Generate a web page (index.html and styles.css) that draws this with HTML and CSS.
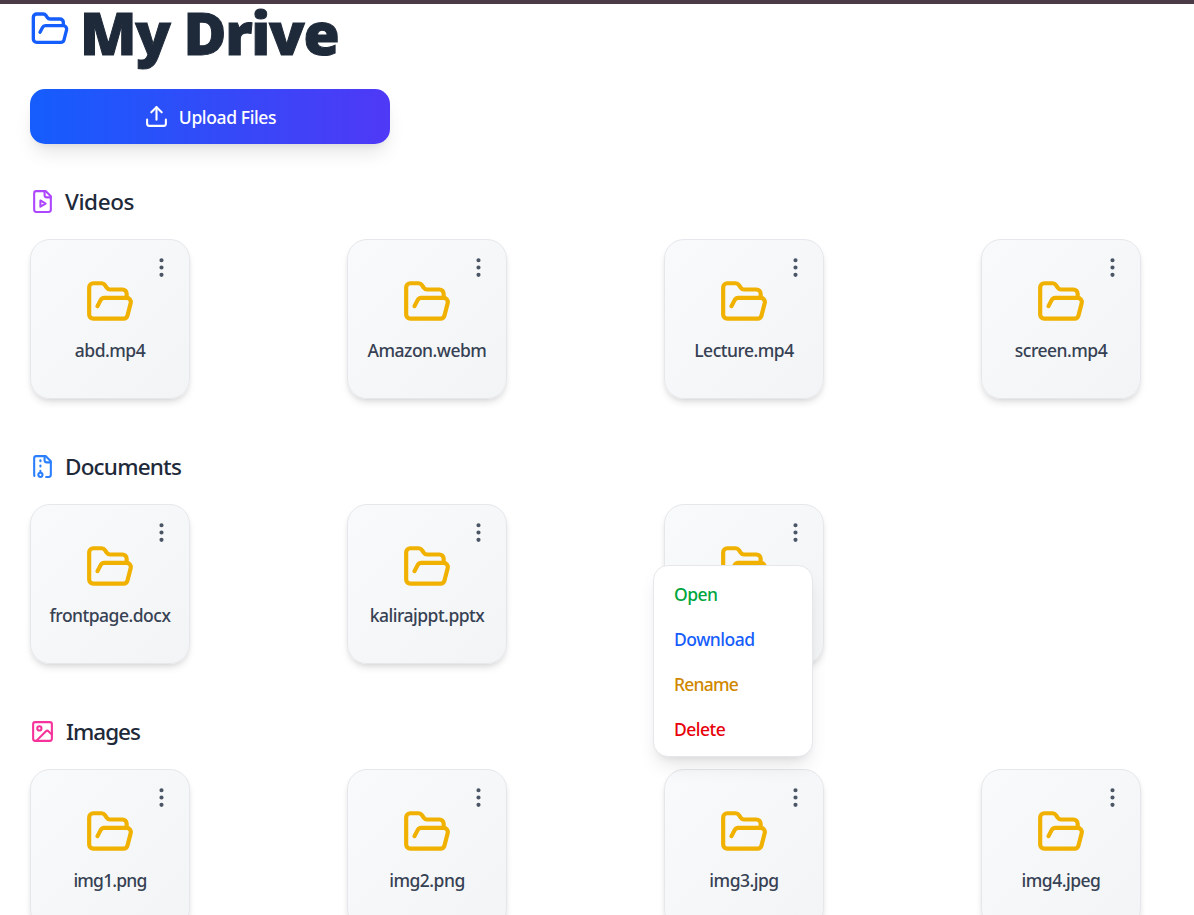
FILE: index.html
```
<!DOCTYPE html>
<html lang="en">
<head>
<meta charset="utf-8">
<title>My Drive</title>
<link rel="stylesheet" href="styles.css">
</head>
<body>
<svg class="sprite" aria-hidden="true">
  <symbol id="folder" viewBox="0 0 24 24"><path d="m6 14 1.5-2.9A2 2 0 0 1 9.24 10H20a2 2 0 0 1 1.94 2.5l-1.54 6a2 2 0 0 1-1.95 1.5H4a2 2 0 0 1-2-2V5a2 2 0 0 1 2-2h3.9a2 2 0 0 1 1.69.9l.81 1.2a2 2 0 0 0 1.67.9H18a2 2 0 0 1 2 2v2"/></symbol>
  <symbol id="upload" viewBox="0 0 24 24"><path d="M12 3v12"/><path d="m17 8-5-5-5 5"/><path d="M21 15v4a2 2 0 0 1-2 2H5a2 2 0 0 1-2-2v-4"/></symbol>
  <symbol id="video" viewBox="0 0 24 24"><path d="M15 2H6a2 2 0 0 0-2 2v16a2 2 0 0 0 2 2h12a2 2 0 0 0 2-2V7Z"/><path d="M14 2v4a2 2 0 0 0 2 2h4"/><path d="m10 11 5 3-5 3v-6Z"/></symbol>
  <symbol id="archive" viewBox="0 0 24 24"><path d="M10 12v-1"/><path d="M10 18v-2"/><path d="M10 7V6"/><path d="M14 2v4a2 2 0 0 0 2 2h4"/><path d="M15.5 22H18a2 2 0 0 0 2-2V7l-5-5H6a2 2 0 0 0-2 2v16a2 2 0 0 0 .274 1.01"/><circle cx="10" cy="20" r="2"/></symbol>
  <symbol id="image" viewBox="0 0 24 24"><rect x="3" y="3" width="18" height="18" rx="2"/><circle cx="9" cy="9" r="2"/><path d="m21 15-3.086-3.086a2 2 0 0 0-2.828 0L6 21"/></symbol>
  <symbol id="dots" viewBox="0 0 24 24"><circle cx="12" cy="12" r="1"/><circle cx="12" cy="5" r="1"/><circle cx="12" cy="19" r="1"/></symbol>
</svg>
<div class="topbar"></div>
<main class="drive">
  <h1 class="title"><svg class="icon title-icon"><use href="#folder"/></svg><span class="title-text">My Drive</span></h1>
  <button class="upload"><svg class="icon small"><use href="#upload"/></svg><span class="upload-text">Upload Files</span></button>

  <section class="group">
    <h2 class="heading"><svg class="icon small purple"><use href="#video"/></svg><span class="videos">Videos</span></h2>
    <div class="files">
      <div class="card"><svg class="icon small dots"><use href="#dots"/></svg><svg class="icon folder"><use href="#folder"/></svg><p class="name">abd.mp4</p></div>
      <div class="card"><svg class="icon small dots"><use href="#dots"/></svg><svg class="icon folder"><use href="#folder"/></svg><p class="name">Amazon.webm</p></div>
      <div class="card"><svg class="icon small dots"><use href="#dots"/></svg><svg class="icon folder"><use href="#folder"/></svg><p class="name">Lecture.mp4</p></div>
      <div class="card"><svg class="icon small dots"><use href="#dots"/></svg><svg class="icon folder"><use href="#folder"/></svg><p class="name">screen.mp4</p></div>
    </div>
  </section>

  <section class="group">
    <h2 class="heading"><svg class="icon small blue"><use href="#archive"/></svg><span class="documents">Documents</span></h2>
    <div class="files">
      <div class="card"><svg class="icon small dots"><use href="#dots"/></svg><svg class="icon folder"><use href="#folder"/></svg><p class="name">frontpage.docx</p></div>
      <div class="card"><svg class="icon small dots"><use href="#dots"/></svg><svg class="icon folder"><use href="#folder"/></svg><p class="name">kalirajppt.pptx</p></div>
      <div class="card"><svg class="icon small dots"><use href="#dots"/></svg><svg class="icon folder"><use href="#folder"/></svg>
        <div class="menu">
          <a class="item open">Open</a>
          <a class="item download">Download</a>
          <a class="item rename">Rename</a>
          <a class="item delete">Delete</a>
        </div>
      </div>
    </div>
  </section>

  <section class="group">
    <h2 class="heading"><svg class="icon small pink"><use href="#image"/></svg><span class="images">Images</span></h2>
    <div class="files">
      <div class="card"><svg class="icon small dots"><use href="#dots"/></svg><svg class="icon folder"><use href="#folder"/></svg><p class="name image-name">img1.png</p></div>
      <div class="card"><svg class="icon small dots"><use href="#dots"/></svg><svg class="icon folder"><use href="#folder"/></svg><p class="name">img2.png</p></div>
      <div class="card"><svg class="icon small dots"><use href="#dots"/></svg><svg class="icon folder"><use href="#folder"/></svg><p class="name">img3.jpg</p></div>
      <div class="card"><svg class="icon small dots"><use href="#dots"/></svg><svg class="icon folder"><use href="#folder"/></svg><p class="name">img4.jpeg</p></div>
    </div>
  </section>
</main>
</body>
</html>
```
FILE: styles.css
```
* { box-sizing: border-box; margin: 0; padding: 0; }
html, body { height: 915px; overflow: hidden; }
body {
  background: #fff;
  color: #1e2939;
  font-family: "Noto Sans", "Open Sans", sans-serif;
}
.sprite { display: none; }
.topbar { height: 4px; background: #4c3a46; }
.drive { padding: 0 53px 0 30px; }
.icon {
  display: block;
  flex: none;
  fill: none;
  stroke: currentColor;
  stroke-width: 2;
  stroke-linecap: round;
  stroke-linejoin: round;
}
.small { width: 25px; height: 25px; }
.title {
  display: flex;
  gap: 10px;
  height: 60px;
  line-height: 56px;
  font-size: 58.5px;
  font-weight: 900;
  letter-spacing: -1.3px;
  white-space: nowrap;
  -webkit-text-stroke: 1px #1e2939;
}
.title-icon { width: 40px; height: 40px; margin-top: 5px; color: #155dfc; }
.upload {
  display: flex;
  align-items: center;
  justify-content: center;
  gap: 10px;
  width: 360px;
  height: 55px;
  margin-top: 25px;
  border: 0;
  border-radius: 15px;
  background: linear-gradient(to right, #155dfc, #4f39f6);
  box-shadow: 0 12px 19px -4px rgba(0, 0, 0, .1), 0 5px 8px -5px rgba(0, 0, 0, .1);
  color: #fff;
  font: 500 17.5px/25px "Noto Sans", "Open Sans", sans-serif;
  letter-spacing: -.38px;
}
.upload-text { padding-top: 2px; }
.group { margin-top: 40px; height: 225px; }
.heading {
  display: flex;
  align-items: center;
  gap: 10px;
  height: 35px;
  font-size: 22.5px;
  line-height: 35px;
  font-weight: 500;
  letter-spacing: -.4px;
}
.documents { letter-spacing: -.8px; }
.images { letter-spacing: -1px; padding-left: 1px; }
.purple { color: #ad46ff; }
.blue { color: #2b7fff; }
.pink { color: #f6339a; }
.files {
  display: grid;
  grid-template-columns: repeat(4, 160px);
  justify-content: space-between;
  margin-top: 20px;
}
.card {
  position: relative;
  display: flex;
  flex-direction: column;
  align-items: center;
  height: 160px;
  padding-top: 37px;
  border: 1px solid #e5e7eb;
  border-radius: 20px;
  background: linear-gradient(to bottom right, #f9fafb, #f3f4f6);
  box-shadow: 0 5px 7px -1px rgba(0, 0, 0, .1), 0 2px 5px -2px rgba(0, 0, 0, .1);
}
.dots { position: absolute; top: 15px; right: 15px; color: #4a5565; }
.folder { width: 50px; height: 50px; color: #f0b100; }
.name {
  margin-top: 11px;
  color: #364153;
  font-size: 17.5px;
  line-height: 25px;
  font-weight: 500;
  letter-spacing: -.5px;
  white-space: nowrap;
}
.image-name { letter-spacing: -.8px; }
.menu {
  position: absolute;
  top: 60px;
  right: 10px;
  z-index: 2;
  width: 160px;
  height: 192px;
  padding: 6px 0;
  border: 1px solid #e5e7eb;
  border-radius: 15px;
  background: #fff;
  box-shadow: 0 12px 19px -4px rgba(0, 0, 0, .1), 0 5px 8px -5px rgba(0, 0, 0, .1);
}
.item {
  display: block;
  height: 45px;
  padding: 0 20px;
  font-size: 17.5px;
  line-height: 45px;
  font-weight: 500;
  letter-spacing: -.5px;
}
.open { color: #00a63e; }
.download { color: #155dfc; }
.rename { color: #d08700; letter-spacing: -.8px; }
.delete { color: #e7000b; }
```
